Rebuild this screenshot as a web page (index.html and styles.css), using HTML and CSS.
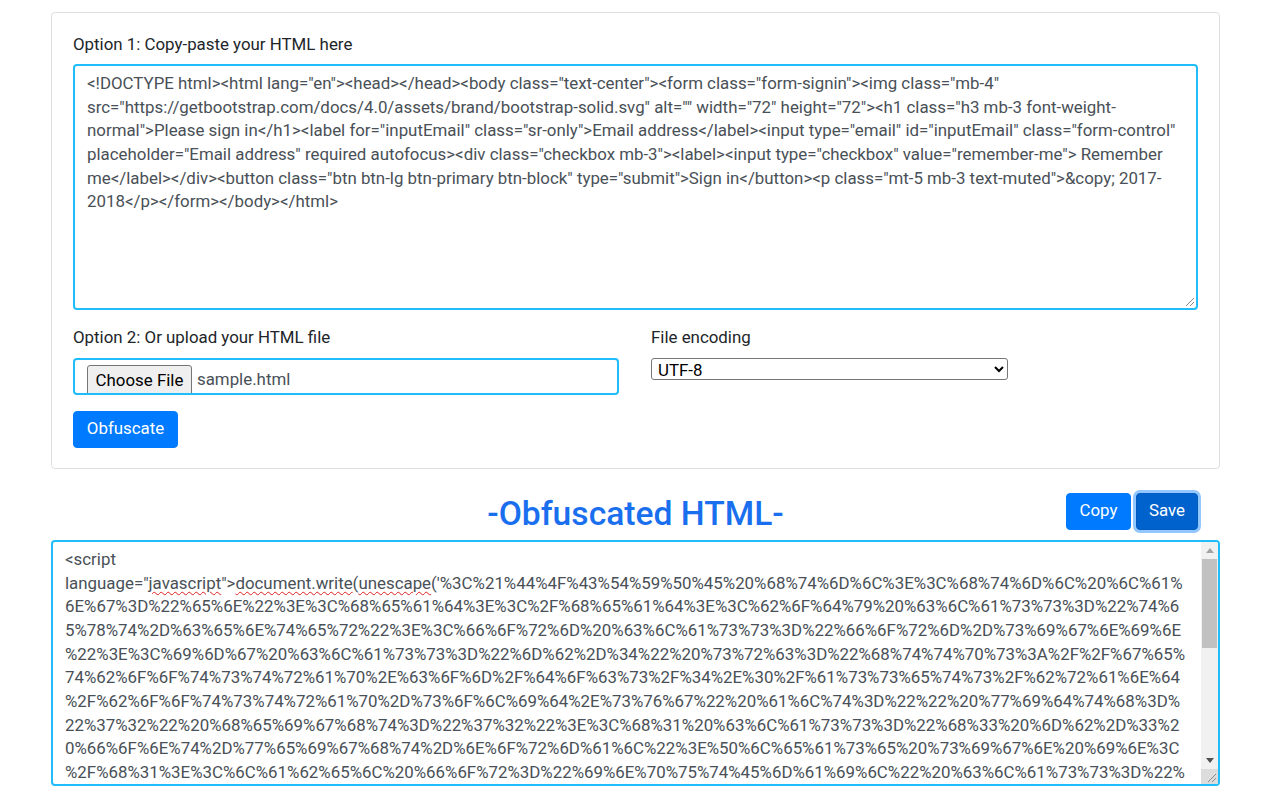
FILE: index.html
```html
<!DOCTYPE html>
<html lang="en">
<head>
<meta charset="utf-8">
<title>HTML Obfuscator</title>
<link rel="stylesheet" href="styles.css">
</head>
<body>
<main class="page">
  <section class="card">
    <div class="label label-first">Option 1: Copy-paste your HTML here</div>
    <div class="source box">
      <div class="line">&lt;!DOCTYPE html&gt;&lt;html lang="en"&gt;&lt;head&gt;&lt;/head&gt;&lt;body class="text-center"&gt;&lt;form class="form-signin"&gt;&lt;img class="mb-4"</div>
      <div class="line">src="https://getbootstrap.com/docs/4.0/assets/brand/bootstrap-solid.svg" alt="" width="72" height="72"&gt;&lt;h1 class="h3 mb-3 font-weight-</div>
      <div class="line">normal"&gt;Please sign in&lt;/h1&gt;&lt;label for="inputEmail" class="sr-only"&gt;Email address&lt;/label&gt;&lt;input type="email" id="inputEmail" class="form-control"</div>
      <div class="line">placeholder="Email address" required autofocus&gt;&lt;div class="checkbox mb-3"&gt;&lt;label&gt;&lt;input type="checkbox" value="remember-me"&gt; Remember</div>
      <div class="line">me&lt;/label&gt;&lt;/div&gt;&lt;button class="btn btn-lg btn-primary btn-block" type="submit"&gt;Sign in&lt;/button&gt;&lt;p class="mt-5 mb-3 text-muted"&gt;&amp;copy; 2017-</div>
      <div class="line">2018&lt;/p&gt;&lt;/form&gt;&lt;/body&gt;&lt;/html&gt;</div>
      <svg class="grip" viewBox="0 0 12 12" aria-hidden="true"><path d="M11 3 3 11M11 7 7 11"/></svg>
    </div>
    <div class="options">
      <div class="upload">
        <div class="label">Option 2: Or upload your HTML file</div>
        <div class="file box">
          <span class="choose">Choose File</span>
          <span class="filename">sample.html</span>
        </div>
      </div>
      <div class="encoding">
        <div class="label">File encoding</div>
        <select class="select"><option>UTF-8</option></select>
      </div>
    </div>
    <button class="btn obfuscate">Obfuscate</button>
  </section>

  <header class="result-head">
    <span></span>
    <h2 class="title">-Obfuscated HTML-</h2>
    <div class="actions">
      <button class="btn">Copy</button>
      <button class="btn btn-active">Save</button>
    </div>
  </header>

  <section class="output box">
    <div class="line">&lt;script</div>
    <div class="line">language="<span class="typo">javascript</span>"&gt;<span class="typo">document.write</span>(<span class="typo">unescape</span>('%3C%21%44%4F%43%54%59%50%45%20%68%74%6D%6C%3E%3C%68%74%6D%6C%20%6C%61%</div>
    <div class="line">6E%67%3D%22%65%6E%22%3E%3C%68%65%61%64%3E%3C%2F%68%65%61%64%3E%3C%62%6F%64%79%20%63%6C%61%73%73%3D%22%74%6</div>
    <div class="line">5%78%74%2D%63%65%6E%74%65%72%22%3E%3C%66%6F%72%6D%20%63%6C%61%73%73%3D%22%66%6F%72%6D%2D%73%69%67%6E%69%6E</div>
    <div class="line">%22%3E%3C%69%6D%67%20%63%6C%61%73%73%3D%22%6D%62%2D%34%22%20%73%72%63%3D%22%68%74%74%70%73%3A%2F%2F%67%65%</div>
    <div class="line">74%62%6F%6F%74%73%74%72%61%70%2E%63%6F%6D%2F%64%6F%63%73%2F%34%2E%30%2F%61%73%73%65%74%73%2F%62%72%61%6E%64</div>
    <div class="line">%2F%62%6F%6F%74%73%74%72%61%70%2D%73%6F%6C%69%64%2E%73%76%67%22%20%61%6C%74%3D%22%22%20%77%69%64%74%68%3D%</div>
    <div class="line">22%37%32%22%20%68%65%69%67%68%74%3D%22%37%32%22%3E%3C%68%31%20%63%6C%61%73%73%3D%22%68%33%20%6D%62%2D%33%2</div>
    <div class="line">0%66%6F%6E%74%2D%77%65%69%67%68%74%2D%6E%6F%72%6D%61%6C%22%3E%50%6C%65%61%73%65%20%73%69%67%6E%20%69%6E%3C</div>
    <div class="line">%2F%68%31%3E%3C%6C%61%62%65%6C%20%66%6F%72%3D%22%69%6E%70%75%74%45%6D%61%69%6C%22%20%63%6C%61%73%73%3D%22%</div>
    <div class="scrollbar">
      <svg class="arrow" viewBox="0 0 8 5" aria-hidden="true"><path d="M4 0 8 5H0z"/></svg>
      <div class="track"><div class="thumb"></div></div>
      <svg class="arrow arrow-dark" viewBox="0 0 8 5" aria-hidden="true"><path d="M0 0H8L4 5z"/></svg>
      <div class="corner"><svg class="grip" viewBox="0 0 12 12" aria-hidden="true"><path d="M11 3 3 11M11 7 7 11"/></svg></div>
    </div>
  </section>
</main>
</body>
</html>
```
FILE: styles.css
```css
* { box-sizing: border-box; }
html, body { margin: 0; height: 100%; overflow: hidden; background: #fff; }
body {
  font-family: Roboto, "Liberation Sans", sans-serif;
  font-size: 16.88px;
  line-height: 23.65px;
  color: #212529;
}
.page { width: 1169px; margin: 12px 0 0 51px; }
.card {
  height: 457px;
  padding: 20px 21px 0;
  border: 1px solid #dfdfdf;
  border-radius: 4px;
}
.label { height: 24px; margin-bottom: 8px; }
.label-first { margin-bottom: 7px; }
.box {
  position: relative;
  border: 2px solid #20bdfb;
  border-radius: 4px;
  color: #495057;
  background: #fff;
}
.line { white-space: nowrap; }
.source { height: 246px; padding: 6px 12px; }
.grip { position: absolute; right: 1px; bottom: 1px; width: 12px; height: 12px; }
.grip path { fill: none; stroke: #8a8a8a; stroke-width: 1; }
.options { display: flex; gap: 32px; margin-top: 16px; }
.upload { width: 546px; }
.encoding { width: 356px; }
.file {
  display: flex;
  align-items: flex-start;
  gap: 5px;
  height: 37px;
  padding: 5px 12px 0;
  overflow: hidden;
}
.choose {
  flex: none;
  width: 105px;
  height: 34px;
  padding-top: 3px;
  text-align: center;
  color: #000;
  background: #efefef;
  border: 1px solid #767676;
  border-radius: 3px;
}
.filename { padding-top: 3px; }
.select {
  display: block;
  width: 357px;
  height: 22px;
  padding: 0 0 2px 2px;
  font: inherit;
  line-height: 20px;
  color: #000;
  background: #fff;
  border: 1px solid #767676;
  border-radius: 3px;
}
.btn {
  height: 37px;
  padding: 0 13px 2px;
  font: inherit;
  color: #fff;
  background: #007bff;
  border: 1px solid #007bff;
  border-radius: 4px;
}
.obfuscate { display: block; width: 105px; margin-top: 16px; padding: 0 0 2px; }
.result-head {
  display: grid;
  grid-template-columns: 1fr auto 1fr;
  align-items: center;
  height: 72px;
}
.title {
  margin: 0;
  padding-top: 17px;
  font-size: 33.65px;
  line-height: 38px;
  font-weight: 500;
  color: #1a6fef;
}
.actions { display: flex; justify-content: flex-end; gap: 5px; padding: 13px 22px 0 0; }
.actions .btn:first-child { width: 65px; padding: 0 0 2px; }
.btn-active {
  width: 62px;
  padding: 0 0 2px;
  background: #0062cc;
  border-color: #005cbf;
  box-shadow: 0 0 0 3px rgba(38, 143, 255, .5);
}
.output {
  height: 246px;
  margin-top: -1px;
  padding: 6px 12px;
  overflow: hidden;
}
.typo { text-decoration: underline wavy #e02020 1px; text-underline-offset: 2px; }
.scrollbar {
  position: absolute;
  top: 0;
  right: 0;
  bottom: 0;
  width: 17px;
  display: flex;
  flex-direction: column;
  align-items: center;
  background: #f1f1f1;
}
.arrow { flex: none; width: 8px; height: 5px; margin: 6px 0; }
.arrow path { fill: #a3a3a3; }
.arrow-dark path { fill: #505050; }
.track { flex: 1; width: 100%; padding: 0 1px; }
.thumb { height: 89px; background: #c1c1c1; }
.corner { position: relative; flex: none; width: 100%; height: 15px; background: #dcdcdc; }
```
